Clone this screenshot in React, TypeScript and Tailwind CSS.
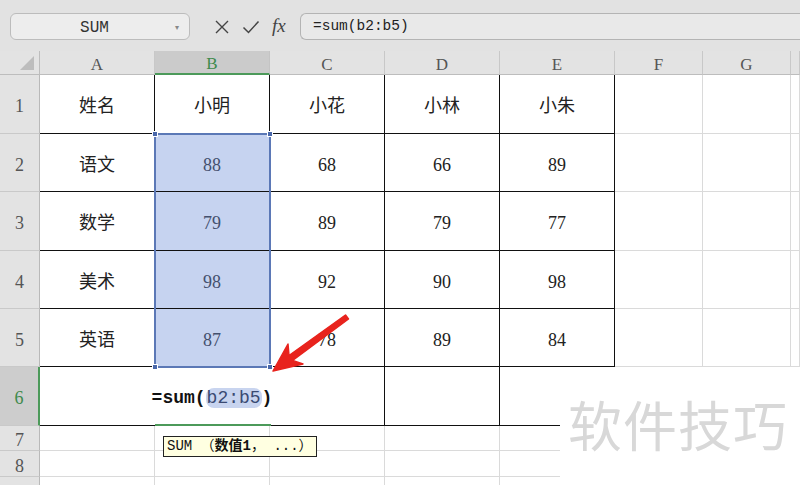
import React from 'react';

const serif = { fontFamily: '"Liberation Serif", "Noto Sans CJK SC", serif' };
const mono = { fontFamily: '"Liberation Mono", "Noto Sans CJK SC", monospace' };

const letters = ['A', 'B', 'C', 'D', 'E', 'F', 'G', ''];

const rows = [
  ['姓名', '小明', '小花', '小林', '小朱'],
  ['语文', '88', '68', '66', '89'],
  ['数学', '79', '89', '79', '77'],
  ['美术', '98', '92', '90', '98'],
  ['英语', '87', '78', '89', '84'],
];

function RowHead({ n, active }: { n: number; active?: boolean }) {
  return (
    <div
      className={`flex items-center justify-center pt-[5px] border-b border-[#c9c9c9] text-[18px] ${
        active
          ? 'bg-[#cdcdcd] text-[#3e8a4c] border-r-2 border-r-[#4c9a5a]'
          : 'bg-[#e3e3e3] text-[#555] border-r border-r-[#b9b9b9]'
      }`}
      style={serif}
    >
      {n}
    </div>
  );
}

function Blank() {
  return <div className="border-r border-b border-[#dadada] bg-white" />;
}

export default function App() {
  return (
    <div className="relative w-[800px] h-[485px] overflow-hidden bg-white select-none">
      {/* formula bar */}
      <div className="h-[51px] bg-[#e2e2e2] flex items-center pl-[10px] pt-[2px]">
        <div className="w-[180px] h-[27px] rounded-[6px] border border-[#bcbcbc] bg-[#ededed] flex items-center">
          <span className="flex-1 text-center text-[16px] text-[#333] pl-[3px] pt-[2px]" style={mono}>SUM</span>
          <span className="w-[14px] text-[8px] text-[#888] leading-none">▾</span>
        </div>
        <div className="w-[110px] flex items-center pl-[24px] gap-[12px]">
          <svg width="16" height="16" viewBox="0 0 16 16" className="text-[#444]">
            <path d="M2 2 L14 14 M14 2 L2 14" stroke="currentColor" strokeWidth="1.4" fill="none" />
          </svg>
          <svg width="18" height="16" viewBox="0 0 18 16" className="text-[#444]">
            <path d="M1.5 8.5 L6.5 13.5 L16.5 2.5" stroke="currentColor" strokeWidth="1.5" fill="none" />
          </svg>
          <span className="text-[19px] italic text-[#444] leading-none -mt-[3px]" style={serif}>fx</span>
        </div>
        <div className="flex-1 h-[27px] rounded-l-[6px] border border-r-0 border-[#b4b4b4] bg-[#e9e9e9] flex items-center pl-[12px] pt-[1px]">
          <span className="text-[14.5px] text-[#222]" style={mono}>=sum(b2:b5)</span>
        </div>
      </div>

      {/* sheet */}
      <div className="relative">
        <div className="grid grid-cols-[40px_115px_115px_115px_115px_115px_88px_88px_1fr] grid-rows-[24px_59px_58px_59px_58px_58px_59px_25px_26px_26px]">
          {/* header row */}
          <div className="relative bg-[#e3e3e3] border-r border-b border-[#bdbdbd]">
            <div className="absolute right-[5px] bottom-[4px] w-0 h-0 border-l-[14px] border-l-transparent border-b-[14px] border-b-[#bdbdbd]" />
          </div>
          {letters.map((l, i) => (
            <div
              key={i}
              className={`flex items-center justify-center pt-[4px] text-[17px] border-r ${
                i === 1
                  ? 'bg-[#cbcbcb] text-[#3e8a4c] border-b-2 border-b-[#4c9a5a] border-r-[#c4c4c4]'
                  : 'bg-[#e3e3e3] text-[#555] border-b border-b-[#bdbdbd] border-r-[#c8c8c8]'
              }`}
              style={serif}
            >
              {l}
            </div>
          ))}

          {/* rows 1-5 */}
          {rows.map((r, ri) => (
            <React.Fragment key={ri}>
              <RowHead n={ri + 1} />
              {r.map((t, ci) => {
                const sel = ci === 1 && ri > 0;
                return (
                  <div
                    key={ci}
                    className={`flex items-center justify-center pt-[5px] text-[18px] border-r border-b border-[#111] ${
                      sel ? 'bg-[#c6d3f0] text-[#44506e]' : 'bg-white text-[#222]'
                    }`}
                    style={serif}
                  >
                    {t}
                  </div>
                );
              })}
              <Blank />
              <Blank />
              <Blank />
            </React.Fragment>
          ))}

          {/* row 6 */}
          <RowHead n={6} active />
          <div className="relative col-span-3 flex items-center justify-center pt-[4px] border-r border-b border-[#111] bg-white">
            <span className="text-[18px] text-[#111]" style={mono}>
              <span className="font-bold">=sum(</span>
              <span className="bg-[#c8d4ef] text-[#3a4a72] rounded-[8px] px-[1px]">b2:b5</span>
              <span className="font-bold">)</span>
            </span>
            <div className="absolute left-[115px] bottom-[-1px] w-[116px] h-[2px] bg-[#4c9a5a]" />
          </div>
          <div className="border-r border-b border-[#111] bg-white" />
          <div className="border-r border-b border-[#111] bg-white" />
          <Blank />
          <Blank />
          <Blank />

          {/* rows 7-9 */}
          {[7, 8, 9].map((n) => (
            <React.Fragment key={n}>
              <RowHead n={n} />
              {[0, 1, 2, 3, 4, 5, 6, 7].map((c) => (
                <Blank key={c} />
              ))}
            </React.Fragment>
          ))}
        </div>

        {/* selection B2:B5 */}
        <div className="absolute left-[154px] top-[82px] w-[117px] h-[235px] border-2 border-[#5b78b6] pointer-events-none">
          <div className="absolute -left-[4px] -top-[4px] w-[6px] h-[6px] bg-[#4a68aa] border border-white" />
          <div className="absolute -right-[4px] -top-[4px] w-[6px] h-[6px] bg-[#4a68aa] border border-white" />
          <div className="absolute -left-[4px] -bottom-[4px] w-[6px] h-[6px] bg-[#4a68aa] border border-white" />
          <div className="absolute -right-[4px] -bottom-[4px] w-[6px] h-[6px] bg-[#4a68aa] border border-white" />
        </div>
      </div>

      {/* function hint */}
      <div
        className="absolute left-[163px] top-[436px] h-[21px] px-[3px] flex items-center border border-[#222] bg-[#ffffe1] text-[14px] text-[#111] whitespace-nowrap"
        style={mono}
      >
        SUM （<span className="font-bold">数值1</span>， ...）
      </div>

      {/* arrow */}
      <svg className="absolute left-0 top-0 pointer-events-none" width="800" height="485" viewBox="0 0 800 485">
        <polygon
          points="273,371 303,364 292.6,360.4 348.5,319 345.5,315 289,355.6 288,344"
          fill="#e8231d"
          stroke="#e8231d"
          strokeWidth="1.5"
          strokeLinejoin="round"
        />
      </svg>

      {/* watermark */}
      <div className="absolute left-[560px] top-[367px] right-0 bottom-0 bg-white flex items-center pl-[8px]">
        <span
          className="text-[54px] leading-none text-[#d8d8d8] tracking-[1px] -mt-[4px]"
          style={{ fontFamily: '"Noto Sans CJK SC", sans-serif' }}
        >
          软件技巧
        </span>
      </div>
    </div>
  );
}
